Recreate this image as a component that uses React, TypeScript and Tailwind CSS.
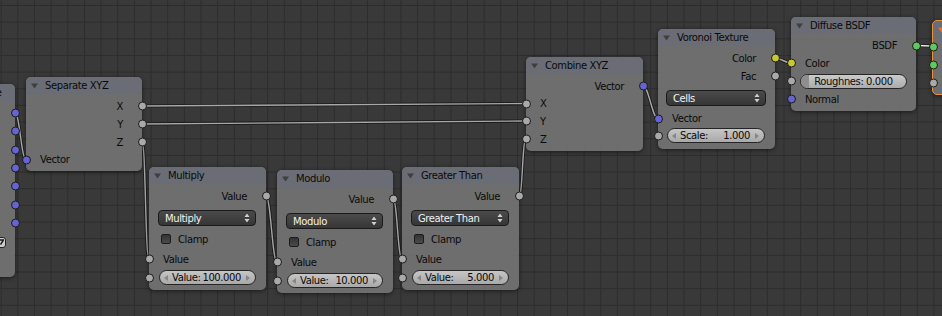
import React, { ReactNode } from 'react';

type SocketColor = 'gray' | 'blue' | 'yellow' | 'green';

const socketFill: Record<SocketColor, string> = {
  gray: 'bg-[#a9a9a9]',
  blue: 'bg-[#6464d2]',
  yellow: 'bg-[#c9c92c]',
  green: 'bg-[#5fc95f]',
};

function Socket({ side, color = 'gray' }: { side: 'left' | 'right'; color?: SocketColor }) {
  return (
    <span
      className={`absolute top-1/2 z-10 h-[9px] w-[9px] -translate-y-1/2 rounded-full border border-[#1b1b1b] ${socketFill[color]} ${
        side === 'left' ? '-left-[4.5px]' : '-right-[4.5px]'
      }`}
    />
  );
}

function Triangle({ color = '#3f3f3f' }: { color?: string }) {
  return (
    <svg width="7" height="6" viewBox="0 0 7 6" className="shrink-0">
      <path d="M0 0.5H7L3.5 5.5Z" fill={color} />
    </svg>
  );
}

interface NodeProps {
  title?: string;
  className: string;
  children: ReactNode;
  active?: boolean;
}

function Node({ title, className, children, active }: NodeProps) {
  return (
    <div
      className={`absolute rounded-[5px] bg-[rgba(116,116,116,0.9)] shadow-[0_1px_4px_rgba(0,0,0,0.55)] ${
        active ? 'border-[1.5px] border-[#e8923a]' : ''
      } ${className}`}
    >
      <div className="flex h-[17px] items-center gap-[7px] overflow-hidden whitespace-nowrap rounded-t-[5px] bg-[#6a6d75] pl-[5px]">
        <Triangle color={active ? '#e8722a' : '#3f3f3f'} />
        {title && <span className="text-[#0a0a0a]">{title}</span>}
      </div>
      {children}
    </div>
  );
}

function OutRow({ label, color, h }: { label?: string; color?: SocketColor; h: string }) {
  return (
    <div className={`relative flex items-center justify-end pr-[19px] ${h}`}>
      {label && <span className="whitespace-nowrap text-[#0a0a0a]">{label}</span>}
      <Socket side="right" color={color} />
    </div>
  );
}

function InRow({ label, color, h }: { label?: string; color?: SocketColor; h: string }) {
  return (
    <div className={`relative flex items-center pl-[14px] ${h}`}>
      {label && <span className="whitespace-nowrap text-[#0a0a0a]">{label}</span>}
      <Socket side="left" color={color} />
    </div>
  );
}

function Dropdown({ label }: { label: string }) {
  return (
    <div className="relative flex h-[16px] items-center rounded-[4px] border border-[#1a1a1a] bg-[linear-gradient(to_bottom,#4b4b4b,#363636)] pl-[6px] text-[#f2f2f2]">
      <span>{label}</span>
      <svg
        width="6"
        height="9"
        viewBox="0 0 6 9"
        className="absolute right-[5px] top-1/2 -translate-y-1/2"
      >
        <path d="M3 0L5.5 3.5H0.5Z M0.5 5.5H5.5L3 9Z" fill="#cfcfcf" />
      </svg>
    </div>
  );
}

function NumField({ label, value }: { label: string; value: string }) {
  return (
    <div className="relative flex h-[15px] items-center justify-between rounded-full border border-[#252525] bg-[linear-gradient(to_bottom,#c6c6c6,#a9a9a9)] pl-[12px] pr-[14px] text-[#0a0a0a]">
      <svg width="4" height="6" viewBox="0 0 4 6" className="absolute left-[4px] top-1/2 -translate-y-1/2">
        <path d="M4 0V6L0 3Z" fill="#868686" />
      </svg>
      <span>{label}</span>
      <span>{value}</span>
      <svg width="4" height="6" viewBox="0 0 4 6" className="absolute right-[5px] top-1/2 -translate-y-1/2">
        <path d="M0 0V6L4 3Z" fill="#868686" />
      </svg>
    </div>
  );
}

function Checkbox({ label }: { label: string }) {
  return (
    <div className="flex h-[20px] items-center gap-[7px] pl-[12px]">
      <span className="h-[10px] w-[10px] rounded-[2px] border border-[#1c1c1c] bg-[linear-gradient(to_bottom,#343434,#4a4a4a)]" />
      <span className="text-[#0a0a0a]">{label}</span>
    </div>
  );
}

function MathNode({ title, op, value, className }: { title: string; op: string; value: [string, string]; className: string }) {
  return (
    <Node title={title} className={className}>
      <div className="pb-[3px] pt-[3px]">
        <OutRow label="Value" h="h-[18px]" />
        <div className="h-[24px] pl-[9px] pr-[10px] pt-[5px]">
          <Dropdown label={op} />
        </div>
        <Checkbox label="Clamp" />
        <InRow label="Value" h="h-[20px]" />
        <div className="relative h-[18px] pl-[10px] pr-[10px] pt-[1px]">
          <Socket side="left" />
          <NumField label={value[0]} value={value[1]} />
        </div>
      </div>
    </Node>
  );
}

type Link = { a: [number, number]; b: [number, number]; hot?: boolean };

const links: Link[] = [
  { a: [15, 113], b: [26, 159.5] },
  { a: [142, 106], b: [526, 103.5] },
  { a: [142, 124], b: [526, 121] },
  { a: [142, 142], b: [149, 259] },
  { a: [266, 196], b: [277, 262] },
  { a: [393, 199], b: [402, 259] },
  { a: [519, 196], b: [526, 139] },
  { a: [643, 86], b: [658, 118.5] },
  { a: [775, 58], b: [791, 63] },
  { a: [916, 45.5], b: [933, 46], hot: true },
];

function linkPath({ a, b }: Link) {
  const h = Math.abs(b[0] - a[0]) * 0.25 + 2;
  return `M${a[0]} ${a[1]} C${a[0] + h} ${a[1]} ${b[0] - h} ${b[1]} ${b[0]} ${b[1]}`;
}

export default function App() {
  return (
    <div className="relative h-[316px] w-[942px] overflow-hidden bg-[#393939] bg-[linear-gradient(to_right,#2c2c2c_1px,transparent_1px),linear-gradient(to_bottom,#2c2c2c_1px,transparent_1px)] font-['DejaVu_Sans',sans-serif] text-[10px] tracking-[-0.4px] [background-position:0.67px_5px] [background-size:16.67px_16.67px]">
      <svg className="absolute inset-0" width="942" height="316">
        {links.map((l, i) => (
          <g key={i}>
            <path d={linkPath(l)} stroke="#151515" strokeOpacity="0.85" strokeWidth="3.2" fill="none" />
            <path d={linkPath(l)} stroke={l.hot ? '#e6e6e6' : '#a8a8a8'} strokeWidth="1.4" fill="none" />
          </g>
        ))}
      </svg>

      {/* texture coordinate, cut off at the left edge; only its sockets show */}
      <Node title="Texture Coordinate" className="left-[-105px] top-[84px] w-[120px]">
        <div className="pb-[25px] pt-[3px]">
          {[0, 1, 2, 3, 4, 5, 6].map((i) => (
            <OutRow key={i} color="blue" h="h-[18.3px]" />
          ))}
          <div className="flex h-[20px] items-center justify-end pr-[9px]">
            <span className="flex h-[11px] w-[16px] items-center justify-end rounded-[3px] border border-[#262626] bg-[#cdcdcd] pr-[1px]">
              <svg width="5" height="6" viewBox="0 0 5 6">
                <path d="M0 1H4.5L1.5 5.5" stroke="#1a1a1a" strokeWidth="1.4" fill="none" />
              </svg>
            </span>
          </div>
        </div>
      </Node>

      <Node title="Separate XYZ" className="left-[26px] top-[77px] w-[116px]">
        <div className="pb-[3px] pt-[3px]">
          <OutRow label="X" h="h-[18px]" />
          <OutRow label="Y" h="h-[18px]" />
          <OutRow label="Z" h="h-[18px]" />
          <InRow label="Vector" color="blue" h="h-[17px]" />
        </div>
      </Node>

      <MathNode title="Multiply" op="Multiply" value={['Value:', '100.000']} className="left-[149px] top-[167px] w-[117px]" />
      <MathNode title="Modulo" op="Modulo" value={['Value:', '10.000']} className="left-[277px] top-[170px] w-[116px]" />
      <MathNode title="Greater Than" op="Greater Than" value={['Value:', '5.000']} className="left-[402px] top-[167px] w-[117px]" />

      <Node title="Combine XYZ" className="left-[526px] top-[57px] w-[117px]">
        <div className="pb-[3px] pt-[3px]">
          <OutRow label="Vector" color="blue" h="h-[18px]" />
          <InRow label="X" h="h-[17px]" />
          <InRow label="Y" h="h-[18px]" />
          <InRow label="Z" h="h-[18px]" />
        </div>
      </Node>

      <Node title="Voronoi Texture" className="left-[658px] top-[29px] w-[117px]">
        <div className="pb-[4px] pt-[3px]">
          <OutRow label="Color" color="yellow" h="h-[18px]" />
          <OutRow label="Fac" h="h-[18px]" />
          <div className="h-[25px] pl-[8px] pr-[9px] pt-[5px]">
            <Dropdown label="Cells" />
          </div>
          <InRow label="Vector" color="blue" h="h-[17px]" />
          <div className="relative h-[18px] pl-[9px] pr-[10px] pt-[1px]">
            <Socket side="left" />
            <NumField label="Scale:" value="1.000" />
          </div>
        </div>
      </Node>

      <Node title="Diffuse BSDF" className="left-[791px] top-[17px] w-[125px]">
        <div className="pb-[3px] pt-[3px]">
          <OutRow label="BSDF" color="green" h="h-[17px]" />
          <InRow label="Color" color="yellow" h="h-[18px]" />
          <div className="relative h-[18px] pl-[9px] pr-[9px] pt-[2px]">
            <Socket side="left" />
            <div className="relative flex h-[15px] items-center justify-center overflow-hidden rounded-full border border-[#252525] bg-[linear-gradient(to_bottom,#cbcbcb,#ababab)] text-[#0a0a0a]">
              <span className="absolute inset-y-0 left-0 w-[8px] bg-[#8e8e8e]" />
              <span className="relative">Roughnes: 0.000</span>
            </div>
          </div>
          <InRow label="Normal" color="blue" h="h-[18px]" />
        </div>
      </Node>

      {/* material output, cut off at the right edge; only its sockets show */}
      <Node active className="left-[932px] top-[20px] w-[140px]">
        <div className="pb-[2px]">
          <InRow color="green" h="h-[18px]" />
          <InRow color="green" h="h-[18px]" />
          <InRow h="h-[18px]" />
        </div>
      </Node>
    </div>
  );
}
